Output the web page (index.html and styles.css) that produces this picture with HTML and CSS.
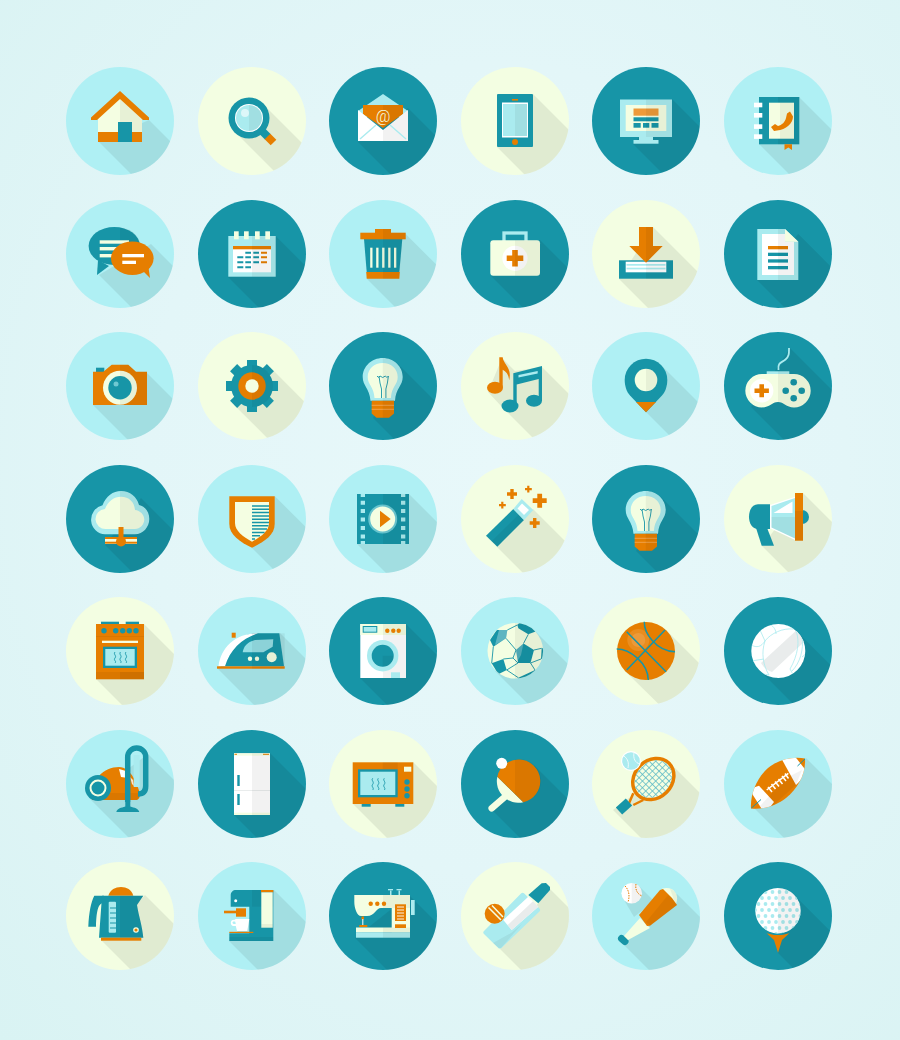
FILE: index.html
```html
<!DOCTYPE html>
<html>
<head>
	<meta charset="utf-8"/>
	<title>Flat icons</title>
	<link rel="stylesheet" href="styles.css">
</head>
<body>
<div class="icons">

	<!-- row 1 -->
	<div class="badge aqua"><svg viewBox="0 0 108 108">
		<polygon class="sh" points="83,53 143,113 93,135 33,75"/>
		<polygon class="c" points="54,28 32,48 32,65 76,65 76,48"/>
		<polygon class="d" points="54,28 76,48 76,65 54,65"/>
		<rect class="o" x="32" y="65" width="44" height="10"/>
		<rect class="t" x="52" y="55" width="14" height="20"/>
		<polygon class="o" points="54,24 83,50.500 83,53 77,53 54,32 31,53 25,53 25,50.500"/>
	</svg></div>
	<div class="badge cream"><svg viewBox="0 0 108 108">
		<polygon class="sh" points="65,37 125,97 97,125 37,65"/>
		<path class="st" stroke-width="8" d="M62 62l8 8"/>
		<path class="so" stroke-width="8" d="M69.500 69.500l6 6"/>
		<circle class="t" cx="51" cy="51" r="20.500"/>
		<circle class="w" cx="51" cy="51" r="14"/>
		<circle class="a" cx="51" cy="51" r="13"/>
		<path class="d" d="M51 38a13 13 0 0 1 0 26z"/>
		<circle class="w" opacity=".6" cx="47" cy="46" r="4"/>
	</svg></div>
	<div class="badge teal"><svg viewBox="0 0 108 108">
		<polygon class="sh" points="79,41 139,101 89,135 29,75"/>
		<polygon class="a" points="54,27 79,44 79,50 29,50 29,44"/>
		<polygon class="o" points="34,38 74,38 74,47 54,61 34,47"/>
		<polygon class="d" points="54,38 74,38 74,47 54,61"/>
		<text class="at" x="54" y="54.500" text-anchor="middle">@</text>
		<polygon class="w" points="29,43 54,63 79,43 79,74 29,74"/>
		<polygon class="d" points="54,63 79,43 79,74 54,74"/>
		<path class="sa" stroke-width="1.400" d="M31 72l16-14M77 72L61 58"/>
	</svg></div>
	<div class="badge cream"><svg viewBox="0 0 108 108">
		<polygon class="sh" points="72,27 132,87 96,140 36,80"/>
		<rect class="t" x="36" y="27" width="36" height="53" rx="1"/>
		<rect class="w" x="41" y="35.500" width="26" height="35"/>
		<rect class="a" x="42" y="37" width="24" height="32"/>
		<rect class="d" x="54" y="37" width="12" height="32"/>
		<rect class="o" x="51" y="32" width="6" height="1.600"/>
		<circle class="o" cx="54" cy="75" r="3"/>
	</svg></div>
	<div class="badge teal"><svg viewBox="0 0 108 108">
		<polygon class="sh" points="80,32 140,92 101,137 41,77"/>
		<rect class="a" x="47" y="70" width="14" height="4"/>
		<rect class="a" x="41.500" y="73" width="25" height="3.700"/>
		<rect class="a" x="28" y="32.500" width="52" height="37.500"/>
		<rect class="c" x="33.700" y="38" width="40.600" height="26"/>
		<rect class="oo" x="41.500" y="41.500" width="25" height="7.200"/>
		<rect class="t" x="41.500" y="50.300" width="25" height="4"/>
		<rect class="t" x="41.500" y="56" width="7.200" height="4.700"/>
		<rect class="t" x="51" y="56" width="6.300" height="4.700"/>
		<rect class="t" x="59.500" y="56" width="7" height="4.700"/>
		<rect class="d" x="54" y="32.500" width="26" height="37.500"/>
	</svg></div>
	<div class="badge aqua"><svg viewBox="0 0 108 108">
		<polygon class="sh" points="75,30 135,90 95,137 35,77"/>
		<rect class="t" x="35" y="30" width="40.300" height="47.300"/>
		<rect class="d" x="54" y="30" width="21.300" height="47.300"/>
		<rect class="c" x="45" y="35.700" width="25" height="36"/>
		<rect class="d" x="56" y="35.700" width="14" height="36"/>
		<rect class="w" x="30" y="35.700" width="8.300" height="4.600"/>
		<rect class="w" x="30" y="46" width="8.300" height="4.600"/>
		<rect class="w" x="30" y="57.300" width="8.300" height="4.600"/>
		<rect class="w" x="30" y="67.300" width="8.300" height="4.600"/>
		<polygon class="o" points="60.500,77.300 68,77.300 68,83 64.300,80.500 60.500,83"/>
		<path class="o" d="M63 46.500l3-2 3 5c0 7-7 13-16 14l-3 .5-3-4 4-3 3 2c4-1 7-4 8-8z"/>
	</svg></div>

	<!-- row 2 -->
	<div class="badge aqua"><svg viewBox="0 0 108 108">
		<polygon class="sh" points="85,44 145,104 93,135 33,75"/>
		<ellipse class="t" cx="48.300" cy="46" rx="25.700" ry="19"/>
		<polygon class="t" points="32,60 31,75 43,66"/>
		<path class="d" d="M54 27.500C66 28 74 36 74 46s-8 18-20 18.500z"/>
		<rect class="c" x="33.700" y="40.300" width="29.300" height="3.400"/>
		<rect class="c" x="33.700" y="47" width="29.300" height="3.400"/>
		<rect class="c" x="33.700" y="54" width="24" height="3.400"/>
		<polygon class="o" points="76,70 84,78 82,64"/>
		<ellipse class="o" cx="66.300" cy="58.300" rx="21.300" ry="16.700"/>
		<rect class="w" x="56.300" y="54" width="21.700" height="3.300"/>
		<rect class="w" x="56.300" y="60.700" width="13.700" height="3.300"/>
	</svg></div>
	<div class="badge teal"><svg viewBox="0 0 108 108">
		<polygon class="sh" points="77.700,36 137.700,96 90,137 30,77"/>
		<rect class="a" x="30.300" y="36" width="47.400" height="40.700"/>
		<rect class="w" x="35" y="46" width="38" height="26.300"/>
		<rect class="o" x="35" y="46" width="38" height="3.300"/>
		<path class="st" stroke-width="2" d="M47.300 52.700h5.700M55.300 52.700h5.700M39.300 57.300h6M47.300 57.300h5.700M55.300 57.300h5.700M39.300 62.300h6M47.300 62.300h5.700M55.300 62.300h5.700M39.300 67.300h6M47.300 67.300h5.700"/>
		<path class="so" stroke-width="2" d="M63 52.700h6M63 57.300h6M63 62.300h6"/>
		<rect class="d" x="54" y="36" width="23.700" height="40.700"/>
		<rect class="c" x="36" y="31.300" width="4.700" height="8"/>
		<rect class="c" x="46" y="31.300" width="4.700" height="8"/>
		<rect class="c" x="57" y="31.300" width="4.700" height="8"/>
		<rect class="c" x="67.300" y="31.300" width="4.700" height="8"/>
	</svg></div>
	<div class="badge aqua"><svg viewBox="0 0 108 108">
		<polygon class="sh" points="76.700,34 136.700,94 98,139 38,79"/>
		<rect class="o" x="46" y="29" width="16" height="4"/>
		<polygon class="t" points="35,39 73.300,39 70.300,72 37.700,72"/>
		<polygon class="o" points="37.200,72 70.800,72 70.300,78.700 37.700,78.700"/>
		<rect class="o" x="31.300" y="32.700" width="45.400" height="6.600"/>
		<rect class="c" x="41.200" y="47.700" width="2.300" height="20"/>
		<rect class="c" x="47.200" y="47.700" width="2.300" height="20"/>
		<rect class="c" x="53.200" y="47.700" width="2.300" height="20"/>
		<rect class="c" x="59.200" y="47.700" width="2.300" height="20"/>
		<rect class="c" x="65" y="47.700" width="2.300" height="20"/>
		<path class="d" d="M54 29h8v3.700h14.700v6.600h-3.400l-3 39.400H54z"/>
	</svg></div>
	<div class="badge teal"><svg viewBox="0 0 108 108">
		<polygon class="sh" points="79,40 139,100 90,136 30,76"/>
		<rect class="sa" stroke-width="3.300" x="43" y="33" width="22" height="10"/>
		<rect class="c" x="29.300" y="40.300" width="49.700" height="35.400" rx="3"/>
		<circle class="w" cx="54" cy="58.300" r="12.600"/>
		<path class="o" d="M51.200 50h5.600v5.500h5.500v5.600h-5.500v5.500h-5.600v-5.500h-5.500v-5.600h5.500z"/>
		<path class="d" d="M54 40.300h22a3 3 0 0 1 3 3v29.400a3 3 0 0 1-3 3H54z"/>
	</svg></div>
	<div class="badge cream"><svg viewBox="0 0 108 108">
		<polygon class="sh" points="61,27 121,87 87,139 27,79"/>
		<rect class="t" x="27" y="60.300" width="54" height="18.400"/>
		<rect class="w" x="33.700" y="61.700" width="40.600" height="10.600"/>
		<rect class="a" x="34.500" y="64" width="39" height="1.700"/>
		<rect class="a" x="34.500" y="67.700" width="39" height="1.700"/>
		<polygon class="o" points="47,27 61,27 61,46 70.700,46 54,62.700 37.300,46 47,46"/>
		<rect class="d" x="54" y="60.300" width="27" height="18.400"/>
		<polygon class="d" points="54,27 61,27 61,46 70.700,46 54,62.700"/>
	</svg></div>
	<div class="badge teal"><svg viewBox="0 0 108 108">
		<polygon class="sh" points="74.300,34 134.300,94 93,140 33,80"/>
		<polygon class="a" points="33.300,29 61,29 74.300,41.700 74.300,80 33.300,80"/>
		<polygon class="w" points="38,34 61,34 61,41.700 70,41.700 70,75 38,75"/>
		<rect class="o" x="44" y="46" width="20" height="3.300"/>
		<rect class="t" x="44" y="52.700" width="20" height="3.300"/>
		<rect class="t" x="44" y="59.300" width="20" height="3.300"/>
		<rect class="t" x="44" y="66" width="20" height="3.300"/>
		<polygon class="d" points="54,29 61,29 74.300,41.700 74.300,80 54,80"/>
		<polygon class="c" points="61,29 61,41.700 74.300,41.700"/>
	</svg></div>

	<!-- row 3 -->
	<div class="badge aqua"><svg viewBox="0 0 108 108">
		<polygon class="sh" points="81,41 141,101 87,133 27,73"/>
		<rect class="t" x="30" y="35.700" width="8.300" height="5"/>
		<polygon class="o" points="37.300,39.700 45.700,32.700 62.300,32.700 70,39.700 81,39.700 81,73 27,73 27,39.700"/>
		<polygon class="d" points="54,32.700 62.300,32.700 70,39.700 81,39.700 81,73 54,73"/>
		<circle class="c" cx="54" cy="55.700" r="17"/>
		<path class="d" d="M54 38.700a17 17 0 0 1 0 34z"/>
		<circle class="t" cx="54" cy="55.700" r="11.700"/>
		<circle class="a" opacity=".6" cx="50" cy="52" r="2.500"/>
	</svg></div>
	<div class="badge cream"><svg viewBox="0 0 108 108">
		<polygon class="sh" points="72.400,35.600 132.400,95.600 95.600,132.400 35.600,72.400"/>
		<g class="t">
			<rect x="49" y="28" width="10" height="52"/>
			<rect x="49" y="28" width="10" height="52" transform="rotate(45 54 54)"/>
			<rect x="49" y="28" width="10" height="52" transform="rotate(90 54 54)"/>
			<rect x="49" y="28" width="10" height="52" transform="rotate(135 54 54)"/>
		</g>
		<circle class="t" cx="54" cy="54" r="21"/>
		<path class="d" d="M54 33a21 21 0 0 1 0 42z"/>
		<circle class="o" cx="54" cy="54" r="13.700"/>
		<path class="d" d="M54 40.300a13.700 13.700 0 0 1 0 27.400z"/>
		<circle class="c" cx="54" cy="54" r="6.700"/>
	</svg></div>
	<div class="badge teal"><svg viewBox="0 0 108 108">
		<polygon class="sh" points="69,32 129,92 104,146 44,86"/>
		<path class="a" d="M53.700 26c11 0 20 8.500 20 19 0 9-7 11-7.700 23.700H41.500C40.500 56 33.700 54 33.700 45c0-10.500 9-19 20-19z"/>
		<path class="c" d="M53.700 31c8.500 0 15 6 15 14 0 8-6 9-6.800 21H45.500c-.8-12-6.800-13-6.800-21 0-8 6.500-14 15-14z"/>
		<path class="st" stroke-width=".9" d="M48 44l1.500 1.500 1.500-1.500 2.700 1.500 2.700-1.500 1.500 1.500 1.500-1.500-1 7-1.500 6v9M50 44l1 7 1.500 6v9"/>
		<path class="o" d="M42.700 68.700H65v12.800l-5 4.200H47.500l-4.800-4.200z"/>
		<path class="oo" d="M42.700 72.700H65v1.200H42.700zM42.700 76.700H65v1.200H42.700z"/>
		<path class="d" d="M53.700 26c11 0 20 8.500 20 19 0 9-7 11-7.700 23.700h-1v12.800l-5 4.200h-6.300z"/>
	</svg></div>
	<div class="badge cream"><svg viewBox="0 0 108 108">
		<polygon class="sh" points="41,26 54,39 81,35 141,95 100,134 40,74 27,60"/>
		<ellipse class="o" cx="34" cy="55.700" rx="8" ry="6"/>
		<path class="o" d="M38.300 25.300h3.400c.5 7 9.500 10 6.500 23-.5-6-3.500-9-6.500-10.500V55h-3.400z"/>
		<ellipse class="t" cx="49" cy="74" rx="8.500" ry="6.500"/>
		<ellipse class="t" cx="73" cy="68.700" rx="8" ry="6"/>
		<polygon class="t" points="52.300,41.300 81,34 81,69 77.700,69 77.700,47 55.700,52.500 55.700,74 52.300,74"/>
		<polygon class="a" points="57.500,43 76.700,39 76.700,41.500 57.500,45.500"/>
	</svg></div>
	<div class="badge aqua"><svg viewBox="0 0 108 108">
		<polygon class="sh" points="69,33 129,93 114,140 54,80"/>
		<path class="t" d="M54 80.300L38 63.500C34.700 60 32.700 54 32.700 48a21.300 21.300 0 0 1 42.600 0c0 6-2 12-5.300 15.500z"/>
		<polygon class="o" points="44,70 64,70 54,80.300"/>
		<circle class="c" cx="54" cy="48" r="11.300"/>
		<path class="d" d="M54 36.700a11.300 11.300 0 0 1 0 22.600z"/>
	</svg></div>
	<div class="badge teal"><svg viewBox="0 0 108 108">
		<polygon class="sh" points="66,16 126,76 87,135 27,75"/>
		<path class="sa" stroke-width="1.800" d="M54.500 38c-1-8 3-7 7-10.500 4-3.500 3.500-7 3.500-11.500"/>
		<rect class="a" x="42.700" y="39.300" width="22.600" height="2.700"/>
		<path class="c" d="M38 42h32a16.700 16.700 0 0 1 0 33.400C62 75.400 60 70 54 70s-8 5.400-16 5.400A16.700 16.700 0 0 1 38 42z"/>
		<circle class="w" cx="37.700" cy="58.700" r="11.700"/>
		<path class="o" d="M35.400 52.300H40v4.100h4.900v4.600H40v4.200h-4.600V61h-4.900v-4.600h4.900z"/>
		<circle class="t" cx="69.700" cy="50.300" r="3.300"/>
		<circle class="t" cx="61.700" cy="58.700" r="3.300"/>
		<circle class="t" cx="77.700" cy="58.700" r="3.300"/>
		<circle class="t" cx="69.700" cy="66.300" r="3.300"/>
		<path class="d" d="M54 39.300h11.300V42H70a16.700 16.700 0 0 1 0 33.400C62 75.400 60 70 54 70z"/>
	</svg></div>

	<!-- row 4 -->
	<div class="badge teal"><svg viewBox="0 0 108 108">
		<polygon class="sh" points="75,33 135,93 99,140 39,80"/>
		<path class="a" d="M39 69.300a14.700 14.700 0 0 1-2.500-29C40 31 47 26 55 26c9 0 16 6 18 14 6 1 10.300 7 10.300 14 0 8-6.300 15.300-14.300 15.300z"/>
		<path class="c" d="M40 64a10 10 0 0 1-1-20c3-8 9-12.300 16-12.300 8 0 13.500 5.300 14 13.300 5 .5 9.300 4.500 9.300 9.500 0 5-4.300 9.500-9.300 9.500z"/>
		<path class="d" d="M54 26h1c9 0 16 6 18 14 6 1 10.300 7 10.300 14 0 8-6.300 15.300-14.300 15.300H54z"/>
		<rect class="c" x="39" y="72" width="32" height="7"/>
		<rect class="o" x="39" y="72" width="32" height="2"/>
		<rect class="o" x="39" y="76.700" width="32" height="2"/>
		<rect class="o" x="52.500" y="62" width="5" height="12"/>
		<circle class="o" cx="55" cy="76.500" r="5"/>
	</svg></div>
	<div class="badge aqua"><svg viewBox="0 0 108 108">
		<polygon class="sh" points="76.700,31 136.700,91 114,143 54,83"/>
		<path class="o" d="M31.300 31.300h45.400V59c0 11-10.700 18-22.700 23.700C42 77 31.300 70 31.300 59z"/>
		<path class="c" d="M37 37h34v21c0 8-8 13.700-17 18.700-9-5-17-10.700-17-18.700z"/>
		<path class="st" stroke-width="1.500" d="M54 41h17M54 44.300h17M54 47.600h17M54 50.900h17M54 54.200h17M54 57.500h17M54 60.800h16.500M54 64.100h15M54 67.400h12.500M54 70.700h8M54 74h3"/>
	</svg></div>
	<div class="badge aqua"><svg viewBox="0 0 108 108">
		<polygon class="sh" points="80,29 140,89 88,139 28,79"/>
		<rect class="t" x="28" y="29" width="52" height="50"/>
		<path class="a" d="M31.700 29H36v3h-4.300zM72 29h4.300v3H72zM31.700 76H36v3h-4.300zM72 76h4.300v3H72z"/>
		<path class="a" d="M31.700 35.700H36v4h-4.300zM31.700 44H36v4h-4.300zM31.700 52.500H36v4h-4.300zM31.700 61H36v4h-4.300zM31.700 69.500H36v4h-4.300zM72 35.700h4.300v4H72zM72 44h4.300v4H72zM72 52.500h4.300v4H72zM72 61h4.300v4H72zM72 69.500h4.300v4H72z"/>
		<rect class="d" x="54" y="29" width="26" height="50"/>
		<circle class="a" opacity=".55" cx="53.700" cy="54" r="14.500"/>
		<circle class="c" cx="53.700" cy="54" r="12.500"/>
		<polygon class="o" points="51,45.700 51,62.300 61.700,54"/>
	</svg></div>
	<div class="badge cream"><svg viewBox="0 0 108 108">
		<polygon class="sh" points="72,44 132,104 96,142 36,82"/>
		<polygon class="t" points="25,70.700 36.300,81.700 63,55 52.300,44"/>
		<polygon class="d" points="30.600,76.200 36.300,81.700 63,55 57.600,49.500"/>
		<polygon class="a" points="52.300,44 60.700,34 72.300,45 63,55"/>
		<polygon class="w" points="56.500,43.500 61,38.500 68,45 63,50"/>
		<path class="o" d="M49.300 24h3.400v3.300H56v3.400h-3.300V34h-3.400v-3.300H46v-3.400h3.300zM76.300 28.700h4.800v4.600h4.600v4.800h-4.600v4.600h-4.800v-4.600h-4.600v-4.800h4.600zM66.200 20.800h2.200V23h2.400v2.200h-2.400v2.400h-2.200v-2.400H64V23h2.200zM40.200 36.800h2.200V39h2.400v2.200h-2.400v2.400h-2.200v-2.400H38V39h2.200zM72 53h3.400v3.300h3.300v3.400h-3.300V63H72v-3.300h-3.300v-3.400H72z"/>
	</svg></div>
	<div class="badge teal"><svg viewBox="0 0 108 108">
		<polygon class="sh" points="69,32 129,92 104,146 44,86"/>
		<path class="a" d="M53.700 26c11 0 20 8.500 20 19 0 9-7 11-7.700 23.700H41.500C40.500 56 33.700 54 33.700 45c0-10.500 9-19 20-19z"/>
		<path class="c" d="M53.700 31c8.500 0 15 6 15 14 0 8-6 9-6.800 21H45.500c-.8-12-6.800-13-6.800-21 0-8 6.500-14 15-14z"/>
		<path class="st" stroke-width=".9" d="M48 44l1.500 1.500 1.500-1.500 2.700 1.500 2.700-1.500 1.500 1.500 1.500-1.500-1 7-1.500 6v9M50 44l1 7 1.500 6v9"/>
		<path class="o" d="M42.700 68.700H65v12.800l-5 4.200H47.500l-4.800-4.200z"/>
		<path class="oo" d="M42.700 72.700H65v1.200H42.700zM42.700 76.700H65v1.200H42.700z"/>
		<path class="d" d="M53.700 26c11 0 20 8.500 20 19 0 9-7 11-7.700 23.700h-1v12.800l-5 4.200h-6.300z"/>
	</svg></div>
	<div class="badge cream"><svg viewBox="0 0 108 108">
		<polygon class="sh" points="79,28 139,88 98,141 38,81"/>
		<path class="t" d="M78 45a7 7 0 0 1 0 14z"/>
		<polygon class="t" points="31.700,62 42.700,62 50,80.700 37.700,80.700"/>
		<path class="t" d="M46 39.300H34c-5.500 0-9 5.500-9 12.400s3.500 12.300 9 12.300h12z"/>
		<polygon class="w" points="46,40 71,31.700 71,75 46,63.300"/>
		<polygon class="a" points="47.500,41 71,33 71,73.500 47.500,62.500"/>
		<polygon class="w" points="49.500,48 68.500,36.500 68.500,48"/>
		<path class="d" d="M47.500 52H71v21.500L47.500 62.500z"/>
		<rect class="o" x="71" y="28" width="8" height="47.700"/>
		<rect class="d" x="71" y="46" width="8" height="29.700"/>
	</svg></div>

	<!-- row 5 -->
	<div class="badge cream"><svg viewBox="0 0 108 108">
		<polygon class="sh" points="78,27 138,87 90,142 30,82"/>
		<rect class="t" x="35" y="24.700" width="18" height="2.400"/>
		<rect class="t" x="59.700" y="24.700" width="13.300" height="2.400"/>
		<rect class="o" x="30" y="27" width="48" height="55.300"/>
		<rect class="d" x="30" y="39" width="48" height="1"/>
		<rect class="d" x="30" y="75" width="48" height="7.300"/>
		<rect class="d" x="54" y="75" width="24" height="7.300"/>
		<g class="t">
			<circle cx="38" cy="33.700" r="2.700"/><circle cx="49.700" cy="33.700" r="2.700"/><circle cx="56.700" cy="33.700" r="2.700"/><circle cx="63.300" cy="33.700" r="2.700"/><circle cx="70" cy="33.700" r="2.700"/>
		</g>
		<rect class="c" x="36" y="43.700" width="36" height="2.300"/>
		<rect class="t" x="37" y="49.700" width="34" height="21.300"/>
		<rect class="a" x="39.300" y="52" width="29.400" height="16.700"/>
		<path class="st" stroke-width=".9" d="M49 55c-2 2.500 2 3.500 0 6s2 3 0 5M54.500 55c-2 2.500 2 3.500 0 6s2 3 0 5M60 55c-2 2.500 2 3.500 0 6s2 3 0 5"/>
	</svg></div>
	<div class="badge aqua"><svg viewBox="0 0 108 108">
		<polygon class="sh" points="82,36 142,96 79,131 19,71"/>
		<rect class="o" x="33.700" y="35.700" width="4" height="5"/>
		<path class="t" d="M23 69.300C27 50 42 36.300 60 36.300h21.300L86 69.300z"/>
		<path class="w" d="M20.500 69.300C23 50 38 36.300 60 36.300 45 41 32 52 27 69.300z"/>
		<path class="a" opacity=".85" d="M44.700 55.300c.8-5.500 4-10 12.300-12.300l18.300-.7-.6 7.400-9.400 5.600z"/>
		<circle class="c" cx="73.700" cy="60.300" r="5"/>
		<circle class="c" cx="52" cy="61.700" r="2.200"/>
		<circle class="c" cx="59" cy="61.700" r="2.200"/>
		<rect class="o" x="19" y="69.300" width="67.700" height="2.400"/>
		<rect class="d" x="54" y="36.300" width="32.700" height="35.400"/>
	</svg></div>
	<div class="badge teal"><svg viewBox="0 0 108 108">
		<polygon class="sh" points="77,27 137,87 91,141 31,81"/>
		<rect class="w" x="31.300" y="27" width="45.700" height="54"/>
		<rect class="c" x="31.300" y="27" width="45.700" height="11"/>
		<rect class="d" x="54" y="27" width="23" height="54"/>
		<rect class="t" x="33.700" y="29" width="14.600" height="6.700"/>
		<rect class="a" x="34.700" y="30" width="12.600" height="4.700"/>
		<g class="o"><circle cx="58.300" cy="33.700" r="2.200"/><circle cx="64.300" cy="33.700" r="2.200"/><circle cx="69.700" cy="33.700" r="2.200"/></g>
		<circle class="a" cx="53.700" cy="58.700" r="15.700"/>
		<circle class="t" cx="53.700" cy="58.700" r="11"/>
		<path class="d" d="M53.700 58.700l11 0a11 11 0 0 1-11 11z"/>
		<rect class="a" x="62" y="75.300" width="9" height="5.700"/>
	</svg></div>
	<div class="badge aqua"><svg viewBox="0 0 108 108">
		<polygon class="sh" points="74,34 134,94 94,134 34,74"/>
		<clipPath id="soccer"><circle cx="54.300" cy="53.800" r="27.800"/></clipPath>
		<circle class="c" cx="54.300" cy="53.800" r="27.800"/>
		<g clip-path="url(#soccer)">
			<g class="t">
				<polygon points="62.500,46.500 73,53 69.500,66 57,66 55,53"/>
				<polygon points="29,43 35.700,33 46.300,33 45,41.300 32.300,49.700"/>
				<polygon points="56.300,28 60,24 76,30 74,34.700 67.300,37.300 57.300,31.300"/>
				<polygon points="30.700,66.300 42.300,62 45.700,73 37.300,77.300"/>
				<polygon points="57.300,80.700 74,73 78,74 68,84 56,84"/>
				<polygon points="80.700,51.300 84,51 84,62 80,62"/>
			</g>
			<path class="st" stroke-width=".9" d="M46.300 33l10-5M45 41.300l10 11.700M62.500 46.500l4.800-9.200M73 53l7.700-1.700M69.500 66l4.500 7M57 66l-11.300 7M45.700 73l11.600 7.700M32.300 49.700L30.700 66.300M42.300 62l9.700-1 5 5M55 53l-3 8M80 62l-10.500 4"/>
			<polygon class="w" opacity=".3" points="38,33 46.300,33 45,41.300 34,48"/>
			<polygon class="w" opacity=".25" points="55,53 62.500,46.500 60,58 56,65"/>
			<rect class="d" x="54" y="24" width="30" height="60"/>
		</g>
	</svg></div>
	<div class="badge cream"><svg viewBox="0 0 108 108">
		<polygon class="sh" points="74.500,33.500 134.500,93.500 94,134 33.500,74.500"/>
		<circle class="o" cx="54" cy="54" r="29"/>
		<circle class="w" opacity=".12" cx="46.300" cy="43" r="11"/>
		<circle class="w" opacity=".12" cx="46.300" cy="43" r="7"/>
		<path class="st" stroke-width="1.500" d="M73 33L34.700 73M34.700 34.700L74 74.700M52.300 24.700C52 36 64 54 83 54.700M24.700 52C38 52 56 66 56.300 83"/>
	</svg></div>
	<div class="badge teal"><svg viewBox="0 0 108 108">
		<polygon class="sh" points="73.400,35 133.400,95 95,133 35.300,73"/>
		<clipPath id="volley"><circle cx="54.300" cy="54" r="27"/></clipPath>
		<circle class="w" cx="54.300" cy="54" r="27"/>
		<g clip-path="url(#volley)">
			<path class="g" d="M75 31c4 3 6 8 6 13L48 75c-5-2-9-5-11-9z"/>
			<path class="sa" stroke-width=".8" d="M27 48c6 3 10 2 14-4M36 33l5 11c6-8 18-13 28-12M46 27c4 3 6 6 6 10M60 27c4 1 7 3 10 5M41 44c-4 12-2 24 4 34M72 34c4 10 2 24-6 38M78 40c2 12-2 26-10 34M52 80l2 6M66 72l5 9M45 78l-11-2M78 60l5-4M27 64l13-2"/>
		</g>
	</svg></div>

	<!-- row 6 -->
	<div class="badge aqua"><svg viewBox="0 0 108 108">
		<polygon class="sh" points="82,24 142,84 83,128 23,68"/>
		<path class="o" d="M26 68c-2-18 12-31 27-31 12 0 19 18 21 27 0 4-2 6-4 6H26z"/>
		<path class="d" d="M26 63h47.500l.5 1c0 4-2 6-4 6H26z"/>
		<polygon class="w" points="53,39 60,41 62,48 55,47"/>
		<polygon class="w" opacity=".8" points="64,47 67,50 68,56 66,54"/>
		<path class="t" d="M50.300 82c1-4 5-4 9-5.500V72h5v4.500c4 1.500 8 1.500 9 5.500z"/>
		<path class="sa" stroke-width="6" d="M70.700 25V57"/>
		<path class="st" stroke-width="5.500" d="M61.700 72V27a9 9 0 0 1 18 0v29q0 8-7.700 8"/>
		<circle class="t" cx="32" cy="58" r="13"/>
		<circle class="sc" stroke-width="2" cx="32" cy="58" r="7.500"/>
	</svg></div>
	<div class="badge teal"><svg viewBox="0 0 108 108">
		<polygon class="sh" points="72,23 132,83 96,145 36,85"/>
		<rect class="w" x="36" y="23.300" width="36" height="61.700"/>
		<rect class="c" x="36" y="23.300" width="36" height="2.300"/>
		<rect class="o" x="36.500" y="23.800" width="2.500" height="1"/>
		<rect class="o" x="65" y="23.800" width="6" height="1"/>
		<rect class="c" x="36" y="82.700" width="36" height="2.300"/>
		<rect class="g" x="36" y="60" width="36" height="1"/>
		<rect class="t" x="39.300" y="45" width="2.400" height="11"/>
		<rect class="t" x="39.300" y="64" width="2.400" height="11"/>
		<rect class="d" x="54" y="23.300" width="18" height="61.700"/>
	</svg></div>
	<div class="badge cream"><svg viewBox="0 0 108 108">
		<polygon class="sh" points="84.300,32.300 144.300,92.300 84,134 24,74"/>
		<rect class="t" x="32.700" y="74" width="9" height="2.700"/>
		<rect class="t" x="66.300" y="74" width="9" height="2.700"/>
		<rect class="o" x="23.700" y="32.300" width="60.600" height="41.700"/>
		<rect class="d" x="53.700" y="32.300" width="15" height="7"/>
		<rect class="t" x="29" y="39.300" width="39.700" height="28"/>
		<rect class="a" x="31.300" y="41.700" width="35" height="23.300"/>
		<rect class="c" x="75" y="36.700" width="7.300" height="5"/>
		<g class="t"><circle cx="78" cy="52" r="2.700"/><circle cx="78" cy="59" r="2.700"/><circle cx="78" cy="65.700" r="2.700"/></g>
		<path class="st" stroke-width=".9" d="M43.700 48.300c-2 2 2 3.500 0 6s2 3.500 0 5.700M49.300 48.300c-2 2 2 3.500 0 6s2 3.500 0 5.700M55.300 48.300c-2 2 2 3.500 0 6s2 3.500 0 5.700"/>
	</svg></div>
	<div class="badge teal"><svg viewBox="0 0 108 108">
		<polygon class="sh" points="73.300,35.400 133.300,95.400 88,137 28,77"/>
		<path class="scr" stroke-width="6.500" d="M44 66.700L30.700 78.300"/>
		<path class="c" d="M36.300 46.700A21.700 21.700 0 0 0 62.300 72.300z"/>
		<path class="o" d="M36.300 46.700A21.700 21.700 0 1 1 62.300 72.300z"/>
		<path class="d" d="M54 29.400A21.700 21.700 0 0 1 62.300 72.300L54 64.100z"/>
		<circle class="w" cx="40.700" cy="33.300" r="5.500"/>
	</svg></div>
	<div class="badge cream"><svg viewBox="0 0 108 108">
		<pattern id="net" width="4.700" height="4.700" patternUnits="userSpaceOnUse">
			<path class="sn" stroke-width="1.500" d="M0 0V4.700M0 0H4.700"/>
		</pattern>
		<polygon class="sh" points="80,35 140,95 81,140 21,80"/>
		<path class="so" stroke-width="2.500" d="M41.300 63.300L37 73.300M51.300 70L41.300 75"/>
		<path class="st" stroke-width="9.500" d="M37 72L27 81"/>
		<ellipse class="o" cx="61.300" cy="49" rx="24" ry="20.500" transform="rotate(-45 61.300 49)"/>
		<ellipse class="c" cx="61.300" cy="49" rx="20.500" ry="17" transform="rotate(-45 61.300 49)"/>
		<ellipse fill="url(#net)" cx="61.300" cy="49" rx="20.500" ry="17" transform="rotate(-45 61.300 49)"/>
		<circle class="w" cx="39" cy="31" r="10"/>
		<circle class="a" cx="39" cy="31" r="8.800"/>
		<path class="sw" stroke-width=".8" d="M32 26c4 3 5 7 4 12M42 23c-1 5 1 10 6 11"/>
	</svg></div>
	<div class="badge aqua"><svg viewBox="0 0 108 108">
		<clipPath id="football"><path d="M81 28.500C82 44 74 58 62 68 52 76 38 80 27 78.500 26 64 33 48 44 38 55 29 70 26 81 28.500z"/></clipPath>
		<polygon class="sh" points="82,28 142,88 90,138 30,78"/>
		<path class="o" d="M81 28.500C82 44 74 58 62 68 52 76 38 80 27 78.500 26 64 33 48 44 38 55 29 70 26 81 28.500z"/>
		<g clip-path="url(#football)">
			<polygon class="w" points="56,26 69,24 84,43 72,55"/>
			<polygon class="w" points="25,59 35,55.700 50,72 41,84"/>
			<polygon class="d" points="62,48 78,40 72,55 42,82 36,76"/>
			<path class="st" stroke-width="1" d="M27.500 78l9.500-8.500M81 29l-7.500 7"/>
		</g>
		<path class="sw" stroke-width="1.500" d="M42.700 60l21.600-16.700M44 57l4 5M47.500 54l4 5M51 51.500l4 5M54.500 49l4 5M58 46l4 5M61 43.500l3.500 5"/>
	</svg></div>

	<!-- row 7 -->
	<div class="badge cream"><svg viewBox="0 0 108 108">
		<polygon class="sh" points="79,33 139,93 95,138 35,78"/>
		<path class="o" d="M42.300 33.700c2-6 7-8.700 12.700-8.700s10.500 2.700 12.300 8.700z"/>
		<path class="t" d="M28.300 33.700H38v7.300c-5 0-7.500 5-8 23.700h-7.700c.7-14.700 2.700-24.700 6-31z"/>
		<path class="t" d="M36 33.700h41.300L71 43c2 12 5.500 22 6.300 32.700H33z"/>
		<rect class="o" x="35" y="75.700" width="40.300" height="3"/>
		<path class="d" d="M54 33.700h23.300L71 43c2 12 5.500 22 6.300 32.700H54z"/>
		<rect class="a" x="42.700" y="39.700" width="7.300" height="31" rx="1"/>
		<path class="st" stroke-width="1.200" d="M44 46h6M44 51h6M44 56h6M44 61h6M44 66h6"/>
		<circle class="c" cx="70" cy="68" r="2.800"/>
		<circle class="o" cx="70" cy="68" r="1.600"/>
	</svg></div>
	<div class="badge aqua"><svg viewBox="0 0 108 108">
		<polygon class="sh" points="76,28 136,88 91,139 31,79"/>
		<path class="t" d="M38 28h37.300v51H31.300v-7.700h20V44.700H32.700V33.300C32.700 30 35 28 38 28z"/>
		<rect class="d" x="54" y="28" width="21.300" height="16.700"/>
		<rect class="d" x="31.300" y="75" width="44" height="4"/>
		<rect class="o" x="63" y="28" width="12.300" height="2.300"/>
		<rect class="c" x="63.300" y="30.300" width="11.400" height="35.400"/>
		<rect class="d" x="63.300" y="62" width="11.400" height="3.700"/>
		<circle class="w" cx="37.700" cy="38.700" r="1.500"/>
		<rect class="o" x="26" y="48.700" width="21.300" height="2.600"/>
		<rect class="o" x="38" y="46.300" width="10" height="8.400"/>
		<path class="w" d="M37 57h14.300l-2 12H39l-1.200-5c-3 .5-5.300-.7-5-3.500.3-2.500 2.700-3 4.700-2.500zm.3 2.800c-1.500-.5-2.800 0-2.800 1 0 1 1.300 1.400 3.200 1.200z"/>
		<rect class="o" x="31.300" y="69.800" width="24" height="1.200"/>
	</svg></div>
	<div class="badge teal"><svg viewBox="0 0 108 108">
		<polygon class="sh" points="80,33 140,93 86,136 26,76"/>
		<rect class="a" x="61" y="28.500" width="1.500" height="5"/>
		<rect class="a" x="59" y="27" width="5" height="1.300"/>
		<rect class="a" x="69.500" y="28.500" width="1.500" height="5"/>
		<rect class="a" x="67.500" y="27" width="5" height="1.300"/>
		<rect class="a" x="82" y="38" width="3.700" height="15"/>
		<path class="c" d="M25.300 33H81v37.300H62.700V46H52c-5 0-6 8-14 8h-6c-4 0-6.700-8-6.700-14z"/>
		<rect class="c" x="27" y="65.500" width="54" height="5"/>
		<rect class="a" x="27" y="70.300" width="54" height="5.400"/>
		<rect class="d" x="54" y="33" width="27" height="13"/>
		<rect class="d" x="54" y="65.500" width="27" height="10.200"/>
		<g class="o"><circle cx="41.700" cy="41.700" r="2.200"/><circle cx="48.300" cy="41.700" r="2.200"/><circle cx="55" cy="41.700" r="2.200"/></g>
		<rect class="o" x="66" y="42.300" width="11" height="16.700"/>
		<path class="sw" stroke-width=".9" d="M68 45h7M68 48h7M68 51h7M68 54h7M68 57h7"/>
		<rect class="o" x="66" y="62.300" width="11" height="3.700"/>
		<rect class="o" x="32.500" y="54.500" width="2.500" height="3"/>
		<rect class="w" x="33.300" y="57" width="1" height="6"/>
		<rect class="o" x="30.300" y="63" width="8" height="2"/>
	</svg></div>
	<div class="badge cream"><svg viewBox="0 0 108 108">
		<polygon class="sh" points="89,27 149,87 99,147 39,87"/>
		<polygon class="t" points="67.300,33 80.700,21.300 85,21 89,25 89,28 77.300,41.300"/>
		<path class="a" d="M60 31.500c1-1 2-1 3-.3L78.500 46.500c.8 1 1 2 0 3L40.500 86c-1 1-2 1-3 .3L23 72c-1-1-1-2 0-3z"/>
		<polygon class="d" points="50,71 61,62 40,86 38,86 32,81"/>
		<polygon class="w" points="67.300,34.700 77.300,44.700 50.700,68 42.300,58"/>
		<polygon class="g" points="72,39.200 77.300,44.700 50.700,68 46.700,63"/>
		<circle class="o" cx="33.700" cy="51.700" r="10"/>
		<path class="sc" stroke-width="1.500" d="M27.500 45.500L40 58M31 43.500L42 55"/>
	</svg></div>
	<div class="badge aqua"><svg viewBox="0 0 108 108">
		<polygon class="sh" points="85,32 145,92 87,138 27,78"/>
		<polygon class="sh" points="47,24 62,39 42,55 32,38"/>
		<circle class="w" cx="39.700" cy="31.300" r="10.300"/>
		<path class="d" d="M39.700 21a10.300 10.300 0 0 1 0 20.600z"/>
		<path class="so" stroke-width="1" stroke-dasharray="1.500 1" d="M33 24c4 4 5 10 3 16M44 22c-1 5 1 10 6 12"/>
		<path class="stl" stroke-width="7" d="M29.500 76.500l3.500 3"/>
		<polygon class="c" points="32,74 48,56 58,66 36,78"/>
		<path class="c" d="M70 26.500c6-1.500 11 0 13 3.500 3 4 2.500 9 .5 13z"/>
		<path class="d" d="M78 26.500c2 1 4 2 5 3.500 3 4 2.500 9 .5 13z"/>
		<polygon class="o" points="47,53 68,28 71,27 80,36 85,43 58,63.700 55,64"/>
		<polygon class="d" points="54,60 76,33 80,36 85,43 58,63.700"/>
	</svg></div>
	<div class="badge teal"><svg viewBox="0 0 108 108">
		<pattern id="dimples" width="7" height="12" patternUnits="userSpaceOnUse" patternTransform="translate(3 3)">
			<circle class="a" cx="3.500" cy="3" r="1.900"/>
			<circle class="a" cx="0" cy="9" r="1.900"/>
			<circle class="a" cx="7" cy="9" r="1.900"/>
		</pattern>
		<polygon class="sh" points="70,32.700 130,92.700 114,151 54,91"/>
		<polygon class="o" points="42.700,71.300 50,73 58,73 65.300,71.300 58,78 54,90.700 50,78"/>
		<circle class="w" cx="54" cy="48.700" r="22.700"/>
		<circle fill="url(#dimples)" cx="54" cy="48.700" r="22.700"/>
		<path class="d" d="M54 26a22.700 22.700 0 0 1 0 45.400z"/>
	</svg></div>

</div>
</body>
</html>
```

FILE: styles.css
```css
*{
	margin:0;
	padding:0;
}
body{
	width:900px;
	height:1040px;
	overflow:hidden;
	background:radial-gradient(ellipse at 55% 45%,#e8f8fa 0%,#e3f6f8 50%,#d9f3f3 100%);
}
.icons{
	display:grid;
	grid-template-columns:repeat(6,108px);
	grid-auto-rows:108px;
	column-gap:23.6px;
	row-gap:24.5px;
	padding:67px 0 0 66px;
}
.badge{
	width:108px;
	height:108px;
	border-radius:50%;
	overflow:hidden;
}
.badge svg{
	display:block;
	width:108px;
	height:108px;
}
.aqua{
	background:#aff0f4;
}
.cream{
	background:#f3fee2;
}
.teal{
	background:#1795a7;
}

/* long shadow under each icon */
.sh{
	fill:#000;
	opacity:.075;
}
/* right half darker */
.d{
	fill:#000;
	opacity:.05;
}

/* fills */
.o{
	fill:#e67e00;
}
.oo{
	fill:#ee9a3a;
}
.t{
	fill:#1795a7;
}
.a{
	fill:#aaebef;
}
.c{
	fill:#f4fee2;
}
.w{
	fill:#fff;
}
.g{
	fill:#e9ecec;
}

/* strokes */
.st,.stl,.so,.sa,.sw,.sc,.scr,.sn{
	fill:none;
}
.st{
	stroke:#1795a7;
}
.stl{
	stroke:#1795a7;
	stroke-linecap:round;
}
.so{
	stroke:#e67e00;
}
.sa{
	stroke:#aaebef;
}
.sw{
	stroke:#fff;
}
.sc{
	stroke:#f4fee2;
}
.scr{
	stroke:#f4fee2;
	stroke-linecap:round;
}
.sn{
	stroke:#58b8c4;
}
.at{
	fill:#f4fee2;
	font-family:Roboto,"Liberation Sans",sans-serif;
	font-size:16px;
	font-weight:300;
}
```
